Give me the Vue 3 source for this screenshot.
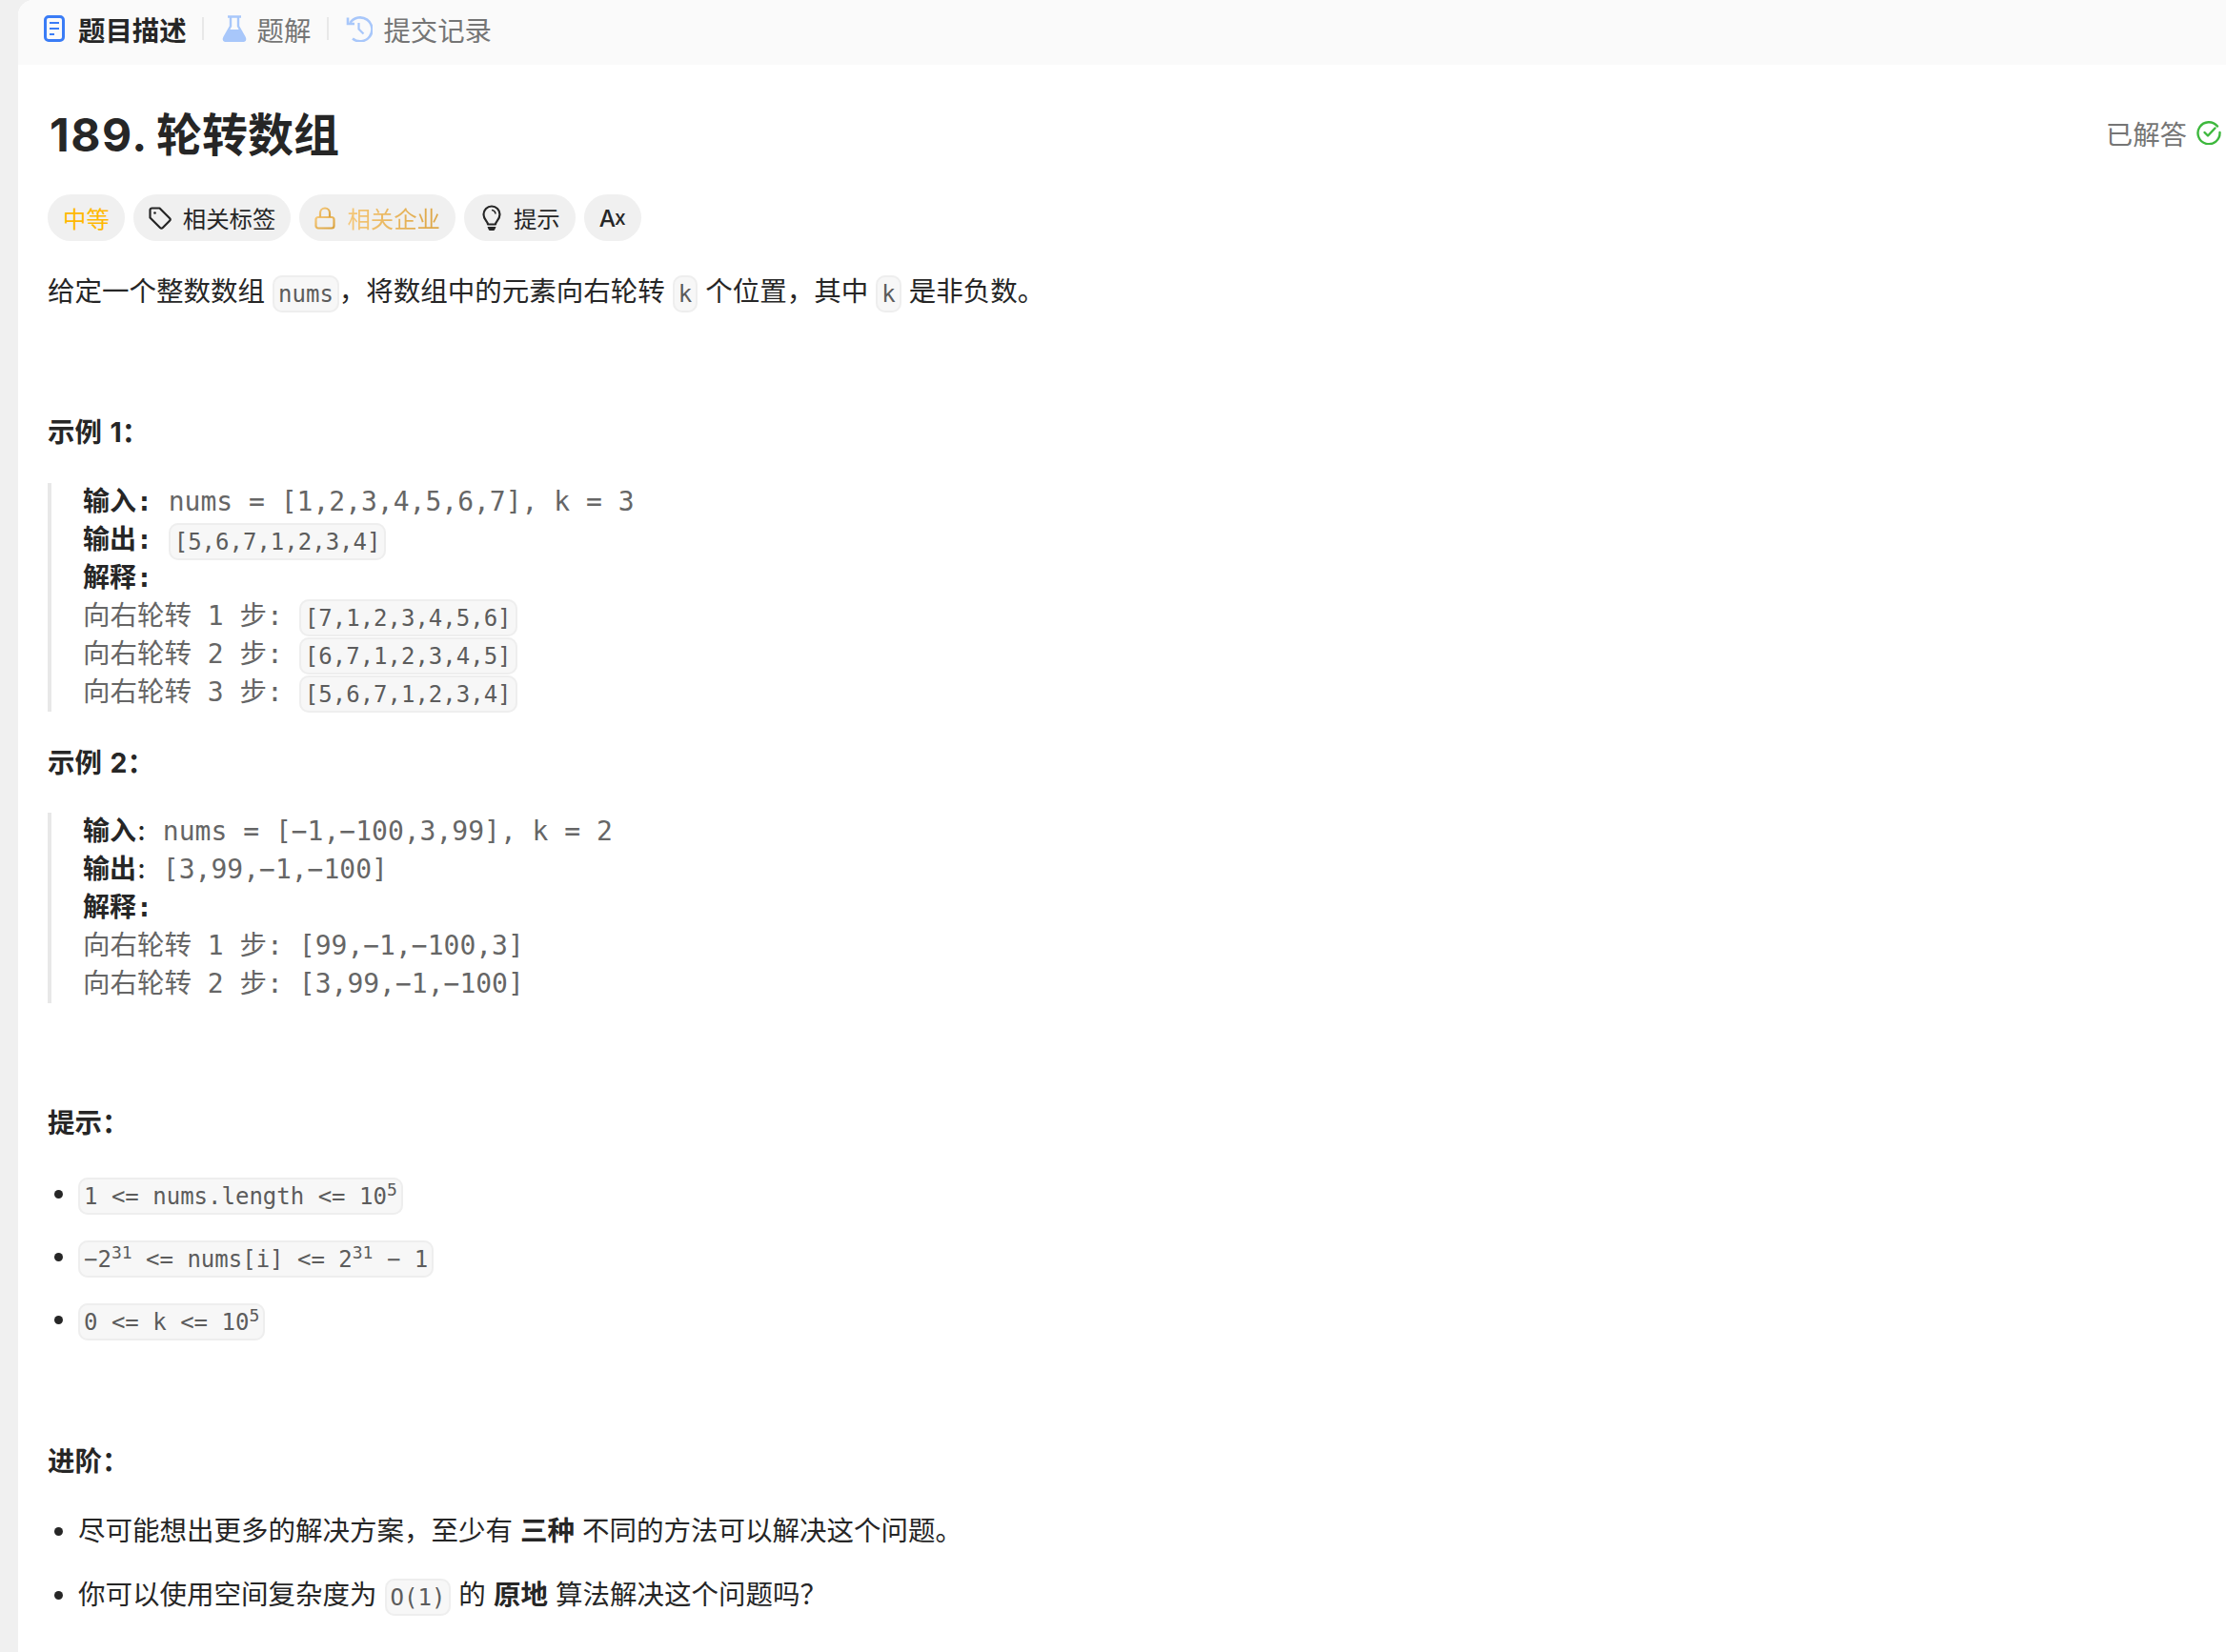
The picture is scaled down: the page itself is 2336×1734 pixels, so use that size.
<template>
  <div class="page">
    <div class="card">
      <div class="tabs">
        <div class="tab active">
          <svg width="22" height="28" viewBox="0 0 22 28" fill="none" stroke="#3a7cf6">
            <rect x="1.5" y="1.5" width="19" height="25" rx="3.5" stroke-width="3" />
            <path d="M6 8h10M6 14h10M6 20h5" stroke-width="2.2" />
          </svg>
          <span>题目描述</span>
        </div>
        <i class="sep"></i>
        <div class="tab">
          <svg width="26" height="28" viewBox="0 0 26 28" fill="none">
            <path d="M6 1.5h14M9 1.5v10L2.5 23q-2 4 2.5 4h16q4.5 0 2.5-4L17 11.5v-10" stroke="#a8c7fa" stroke-width="2.4" />
            <path d="M6.5 15L2.5 23q-2 4 2.5 4h16q4.5 0 2.5-4l-4-8z" fill="#a8c7fa" />
          </svg>
          <span>题解</span>
        </div>
        <i class="sep"></i>
        <div class="tab">
          <svg width="28" height="28" viewBox="1 0 28 28" fill="none" stroke="#a8c7fa" stroke-width="2.6">
            <path d="M5.5 8A12.5 12.5 0 1 1 8 24.5" />
            <path d="M3 2.5v6.5h7" />
            <path d="M14.5 8v6.5l5 5" stroke-width="2.2" />
          </svg>
          <span>提交记录</span>
        </div>
      </div>

      <div class="content">
        <div class="title-row">
          <h1><span class="num">189.</span> 轮转数组</h1>
          <div class="status">
            已解答
            <svg width="26" height="26" viewBox="0 0 26 26" fill="none" stroke="#3db83d" stroke-width="2.4">
              <path d="M22 6.5A11.5 11.5 0 1 0 24.5 13" stroke-linecap="round" />
              <path d="M8.5 13l3.5 3.5 7.5-8" stroke-linecap="round" stroke-linejoin="round" />
            </svg>
          </div>
        </div>

        <div class="pills">
          <div class="pill easy">中等</div>
          <div class="pill">
            <svg width="24" height="24" viewBox="0 0 24 24" fill="none" stroke="#262626" stroke-width="2.2">
              <path d="M1.5 3.5a2 2 0 0 1 2-2h8l10.5 10.5a2 2 0 0 1 0 2.8l-7.2 7.2a2 2 0 0 1-2.8 0L1.5 11.5z" stroke-linejoin="round" />
              <circle cx="6.5" cy="6.5" r="1.3" fill="#262626" stroke="none" />
            </svg>
            相关标签
          </div>
          <div class="pill gold">
            <svg width="22" height="24" viewBox="0 0 22 24" fill="none" stroke="url(#lockGold)" stroke-width="2.2">
              <defs>
                <linearGradient id="lockGold" x1="0" y1="0" x2="1" y2="1">
                  <stop offset="0" stop-color="#f5c778" />
                  <stop offset="1" stop-color="#d9a23e" />
                </linearGradient>
              </defs>
              <rect x="1.5" y="11" width="19" height="11.5" rx="2.5" />
              <path d="M6 11V6.5a5 5 0 0 1 10 0V11" />
            </svg>
            <span class="gold-text">相关企业</span>
          </div>
          <div class="pill hint">
            <svg width="20" height="28" viewBox="0 0 20 28" fill="none" stroke="#262626" stroke-width="2.2">
              <path d="M6 20.5c0-3-4.5-5-4.5-10.5a8.5 8.5 0 0 1 17 0c0 5.5-4.5 7.5-4.5 10.5z" stroke-linejoin="round" />
              <path d="M10 5.5a4.5 4.5 0 0 1 4 4" stroke-width="1.6" />
              <path d="M5.5 23h9l-1 2.5q-.5 1.5-2 1.5h-3q-1.5 0-2-1.5z" fill="#262626" stroke="none" />
            </svg>
            提示
          </div>
          <div class="pill lang"><span>A</span><span class="lang-small">x</span></div>
        </div>

        <p class="desc">给定一个整数数组 <code>nums</code>，将数组中的元素向右轮转 <code>k</code> 个位置，其中 <code>k</code> 是非负数。</p>

        <p class="heading ex1">示例 1：</p>
        <pre class="quote first"><strong>输入:</strong> nums = [1,2,3,4,5,6,7], k = 3
<strong>输出:</strong> <code>[5,6,7,1,2,3,4]</code>
<strong>解释:</strong>
<span class="zh">向右轮转</span> 1 <span class="zh">步</span>: <code>[7,1,2,3,4,5,6]</code>
<span class="zh">向右轮转</span> 2 <span class="zh">步</span>: <code>[6,7,1,2,3,4,5]</code>
<span class="zh">向右轮转</span> 3 <span class="zh">步</span>: <code>[5,6,7,1,2,3,4]</code></pre>

        <p class="heading ex2">示例 2：</p>
        <pre class="quote second"><strong>输入</strong><span class="colon">:</span> nums = [−1,−100,3,99], k = 2
<strong>输出</strong><span class="colon">:</span> [3,99,−1,−100]
<strong>解释:</strong>
<span class="zh">向右轮转</span> 1 <span class="zh">步</span>: [99,−1,−100,3]
<span class="zh">向右轮转</span> 2 <span class="zh">步</span>: [3,99,−1,−100]</pre>

        <p class="heading hints">提示：</p>
        <ul class="list code-list">
          <li><code>1 &lt;= nums.length &lt;= 10<sup>5</sup></code></li>
          <li><code>−2<sup>31</sup> &lt;= nums[i] &lt;= 2<sup>31</sup> − 1</code></li>
          <li><code>0 &lt;= k &lt;= 10<sup>5</sup></code></li>
        </ul>

        <p class="heading adv">进阶：</p>
        <ul class="list text-list">
          <li>尽可能想出更多的解决方案，至少有 <strong>三种</strong> 不同的方法可以解决这个问题。</li>
          <li>你可以使用空间复杂度为 <code>O(1)</code> 的 <strong>原地</strong> 算法解决这个问题吗？</li>
        </ul>
      </div>
    </div>

    <div
      v-for="m in marks"
      :key="m.key"
      class="mark"
      :style="{ left: m.x + 'px', top: m.y + 'px' }"
    >
      <div>E1A2F85548</div>
      <div>6458A2A018</div>
      <div>F5E45130D9</div>
      <div>9E</div>
    </div>
  </div>
</template>

<script setup>
// watermark sits on a skewed lattice, measured from the screenshot
const marks = []
for (let i = -4; i < 8; i++) {
  for (let j = -3; j < 8; j++) {
    const x = 1136 + i * 536 + j * 261
    const y = 175 - i * 25 + j * 339
    if (x > -300 && x < 2400 && y > -100 && y < 2000) {
      marks.push({ key: i + '_' + j, x, y })
    }
  }
}
</script>

<style>
html, body {
  margin: 0;
  background: #f0f0f0;
}
</style>

<style scoped>
.page {
  position: relative;
  width: 2336px;
  height: 1734px;
  overflow: hidden;
  padding-left: 19px;
  box-sizing: border-box;
  background: #f0f0f0;
  font-family: Inter, "Noto Sans CJK SC", sans-serif;
  color: #262626;
}
.card {
  height: 100%;
  background: #fff;
  border-radius: 16px 0 0 0;
  overflow: hidden;
}
.tabs {
  display: flex;
  align-items: center;
  height: 68px;
  padding: 0 0 8px 27px;
  background: #fafafa;
  box-sizing: border-box;
}
.tab {
  display: flex;
  align-items: center;
  gap: 11px;
  font-size: 28.4px;
  color: #757575;
}
.tab.active {
  gap: 14px;
  color: #262626;
  font-weight: 600;
}
.sep {
  width: 2px;
  height: 24px;
  margin: 0 18.5px 0 16.5px;
  background: #e8e8e8;
}
.content {
  padding: 42px 5px 0 31px;
}
.title-row {
  display: flex;
  justify-content: space-between;
  align-items: center;
  height: 60px;
}
h1 {
  margin: 0;
  padding: 3px 0 0 2px;
  font-size: 48px;
  font-weight: 700;
  line-height: 60px;
  word-spacing: -3px;
}
.num {
  letter-spacing: 1.5px;
}
.status {
  display: flex;
  align-items: center;
  gap: 10px;
  margin-bottom: 2px;
  font-size: 28.4px;
  color: #757575;
}
.pills {
  display: flex;
  gap: 9px;
  margin-top: 34px;
}
.pill {
  display: flex;
  align-items: center;
  gap: 12px;
  height: 49px;
  padding: 0 16px;
  border-radius: 25px;
  background: #f0f0f0;
  font-size: 24.4px;
  color: #262626;
}
.easy {
  color: #ffb800;
}
.hint {
  padding: 0 16px 0 19px;
  gap: 13px;
}
.gold-text {
  background: linear-gradient(90deg, #f5c778, #dca544);
  -webkit-background-clip: text;
  background-clip: text;
  color: transparent;
}
.lang {
  gap: 0;
  font-weight: 500;
}
.lang-small {
  font-size: 21px;
  margin-left: -1px;
}
.desc {
  margin: 33px 0 0;
  font-size: 28.5px;
  line-height: 40px;
}
code {
  padding: 3.5px 4px;
  border: 2px solid #eeeeee;
  border-radius: 10px;
  background: #f7f7f7;
  font-family: "DejaVu Sans Mono", "Noto Sans CJK SC", monospace;
  font-size: 24px;
  line-height: 0;
  color: #5c5c5c;
}
sup {
  font-size: 18px;
  line-height: 0;
}
.heading {
  margin: 0;
  font-size: 28.45px;
  line-height: 40px;
  font-weight: 700;
  word-spacing: 2px;
}
.ex1 {
  margin-top: 108px;
}
.ex2 {
  margin-top: 34px;
}
.hints {
  margin-top: 106px;
}
.adv {
  margin-top: 109px;
}
.quote {
  margin: 33px 0 0;
  padding-left: 33px;
  border-left: 4px solid #e8e8e8;
  font-family: "DejaVu Sans Mono", "Noto Sans CJK SC", monospace;
  font-size: 28px;
  line-height: 40px;
  color: #666666;
}
.quote.second {
  margin-top: 32px;
}
.quote strong {
  color: #262626;
  font-weight: 700;
}
.zh {
  font-size: 28.5px;
  line-height: 0;
}
.colon {
  display: inline-block;
  width: 11px;
  font-family: Inter, sans-serif;
  font-weight: 500;
  line-height: 0;
  color: #262626;
  text-align: center;
}
.list {
  margin: 34px 0 0;
  padding: 0 0 0 32px;
  font-size: 28.5px;
  line-height: 40px;
}
.list li {
  margin-bottom: 26px;
}
.list li::marker {
  font-size: 28px;
}
.text-list {
  margin-top: 33px;
}
.text-list li {
  margin-bottom: 27px;
}
.mark {
  position: absolute;
  transform-origin: 0 0;
  transform: rotate(-48deg);
  font-family: "Noto Sans", sans-serif;
  font-size: 30px;
  line-height: 46px;
  white-space: nowrap;
  color: rgba(0, 0, 0, 0.018);
  pointer-events: none;
}
</style>
